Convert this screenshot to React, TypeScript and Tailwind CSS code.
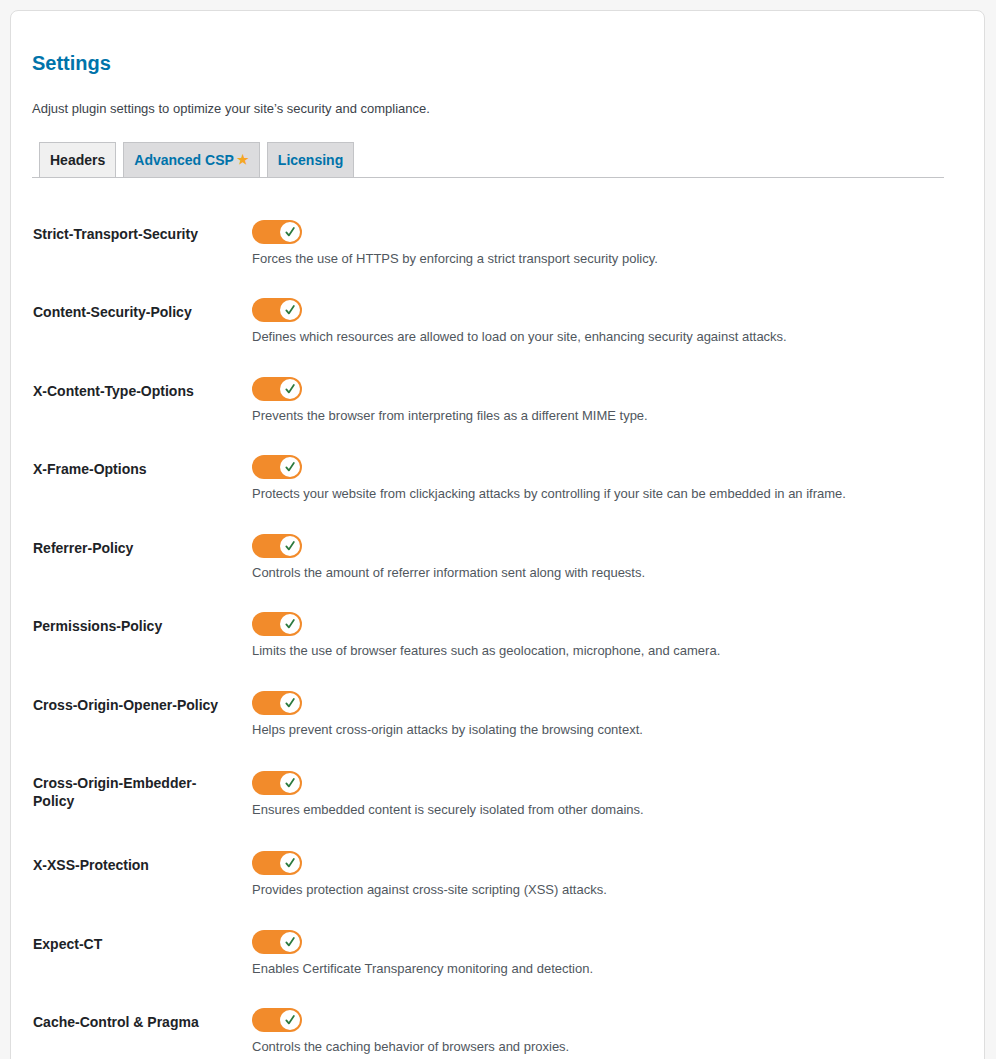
import React from 'react';

interface HeaderSetting {
  id: string;
  label: string;
  description: string;
}

const settings: HeaderSetting[] = [
  { id: 'hsts', label: 'Strict-Transport-Security', description: 'Forces the use of HTTPS by enforcing a strict transport security policy.' },
  { id: 'csp', label: 'Content-Security-Policy', description: 'Defines which resources are allowed to load on your site, enhancing security against attacks.' },
  { id: 'xcto', label: 'X-Content-Type-Options', description: 'Prevents the browser from interpreting files as a different MIME type.' },
  { id: 'xfo', label: 'X-Frame-Options', description: 'Protects your website from clickjacking attacks by controlling if your site can be embedded in an iframe.' },
  { id: 'referrer', label: 'Referrer-Policy', description: 'Controls the amount of referrer information sent along with requests.' },
  { id: 'permissions', label: 'Permissions-Policy', description: 'Limits the use of browser features such as geolocation, microphone, and camera.' },
  { id: 'coop', label: 'Cross-Origin-Opener-Policy', description: 'Helps prevent cross-origin attacks by isolating the browsing context.' },
  { id: 'coep', label: 'Cross-Origin-Embedder-Policy', description: 'Ensures embedded content is securely isolated from other domains.' },
  { id: 'xxss', label: 'X-XSS-Protection', description: 'Provides protection against cross-site scripting (XSS) attacks.' },
  { id: 'expect-ct', label: 'Expect-CT', description: 'Enables Certificate Transparency monitoring and detection.' },
  { id: 'cache', label: 'Cache-Control & Pragma', description: 'Controls the caching behavior of browsers and proxies.' },
];

const Toggle: React.FC = () => (
  <span className="relative flex h-[24px] w-[50px] items-center rounded-full bg-[#f28b2b]">
    <span className="absolute right-[2px] top-[2px] flex h-[20px] w-[20px] items-center justify-center rounded-full bg-white">
      <svg viewBox="0 0 16 16" className="h-[14px] w-[14px]" fill="none">
        <path d="M3.8 8.4 L6.7 11.9 L12.4 3.4" stroke="#2c7a3f" strokeWidth="2" strokeLinecap="round" strokeLinejoin="round" />
      </svg>
    </span>
  </span>
);

export default function App() {
  return (
    <div className="min-h-screen bg-[#f6f6f6] pt-[10px] pl-[10px] font-['Liberation_Sans',Arial,sans-serif]">
      <div className="w-[975px] rounded-[8px] border border-[#dedede] bg-white pl-[21px] pr-[40px] pt-[40px]">
        <h2 className="text-[20px] font-bold leading-[24px] text-[#0073aa]">Settings</h2>
        <p className="mt-[24px] text-[13px] leading-[19.5px] text-[#3c434a]">
          Adjust plugin settings to optimize your site&rsquo;s security and compliance.
        </p>

        <nav className="mt-[23px] flex border-b border-[#c3c4c7] pl-[7px]">
          <span className="-mb-px border border-[#c3c4c7] bg-[#f0f0f0] px-[10px] py-[5px] text-[14px] font-bold leading-[24px] text-[#1d2327]">
            Headers
          </span>
          <span className="-mb-px ml-[7px] flex items-center border border-[#c3c4c7] bg-[#dcdcde] px-[10px] py-[5px] text-[14px] font-bold leading-[24px] text-[#0073aa]">
            Advanced CSP
            <span className="ml-[3px] text-[13px] text-[#f5a623]">★</span>
          </span>
          <span className="-mb-px ml-[7px] border border-[#c3c4c7] bg-[#dcdcde] px-[10px] py-[5px] text-[14px] font-bold leading-[24px] text-[#0073aa]">
            Licensing
          </span>
        </nav>

        <div className="mt-[27px] flex flex-col">
          {settings.map((item) => (
            <div key={item.id} className="flex items-stretch">
              <div className="w-[220px] shrink-0 pl-[1px] pr-[20px] pt-[20px] pb-[26px] text-[14px] font-bold leading-[18px] text-[#1d2327]">
                {item.label}
              </div>
              <div className="flex flex-col justify-center py-[15px]">
                <Toggle />
                <p className="mt-[5px] text-[13px] leading-[19.5px] text-[#50575e]">{item.description}</p>
              </div>
            </div>
          ))}
        </div>
      </div>
    </div>
  );
}
